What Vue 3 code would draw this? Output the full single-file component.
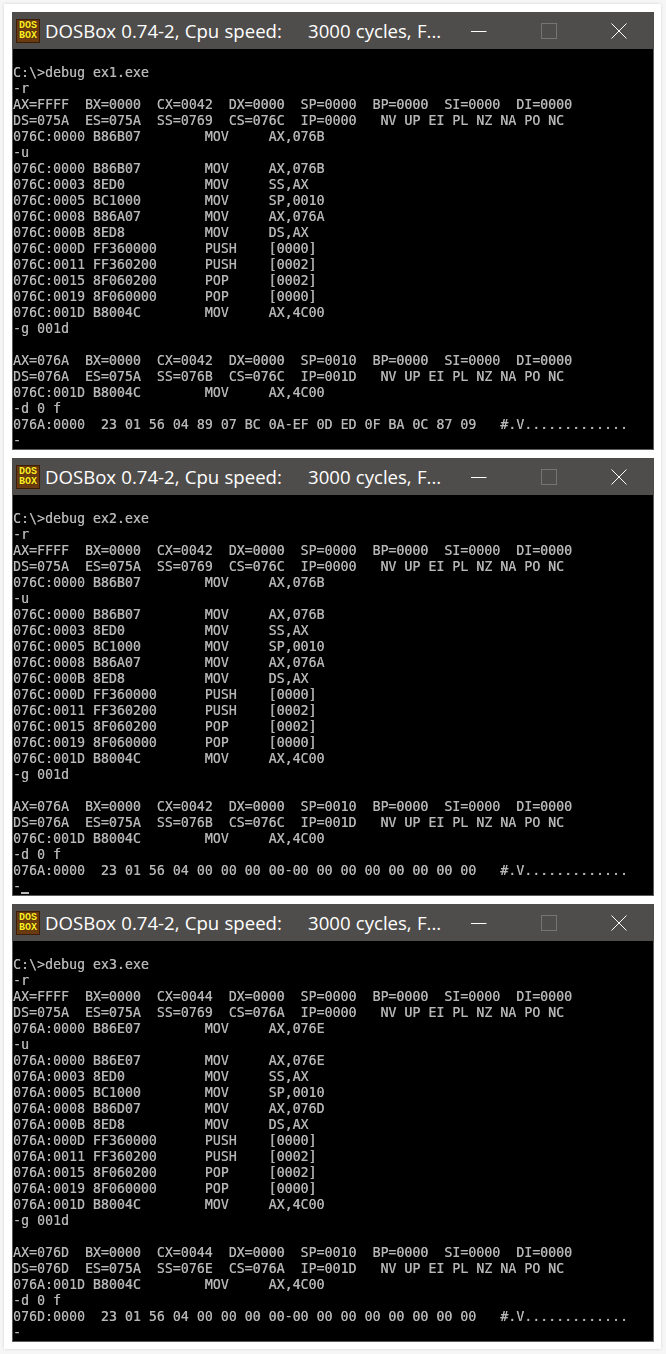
<script setup>
const build = (n, cx, cs, ae, ad, ss, dump, cursor) => ({
  id: n,
  cursor,
  lines: [
    '',
    `C:\\>debug ex${n}.exe`,
    '-r',
    `AX=FFFF  BX=0000  CX=${cx}  DX=0000  SP=0000  BP=0000  SI=0000  DI=0000`,
    `DS=075A  ES=075A  SS=0769  CS=${cs}  IP=0000   NV UP EI PL NZ NA PO NC`,
    `${cs}:0000 B8${ae.slice(2)}${ae.slice(0, 2)}        MOV     AX,${ae}`,
    '-u',
    `${cs}:0000 B8${ae.slice(2)}${ae.slice(0, 2)}        MOV     AX,${ae}`,
    `${cs}:0003 8ED0          MOV     SS,AX`,
    `${cs}:0005 BC1000        MOV     SP,0010`,
    `${cs}:0008 B8${ad.slice(2)}${ad.slice(0, 2)}        MOV     AX,${ad}`,
    `${cs}:000B 8ED8          MOV     DS,AX`,
    `${cs}:000D FF360000      PUSH    [0000]`,
    `${cs}:0011 FF360200      PUSH    [0002]`,
    `${cs}:0015 8F060200      POP     [0002]`,
    `${cs}:0019 8F060000      POP     [0000]`,
    `${cs}:001D B8004C        MOV     AX,4C00`,
    '-g 001d',
    '',
    `AX=${ad}  BX=0000  CX=${cx}  DX=0000  SP=0010  BP=0000  SI=0000  DI=0000`,
    `DS=${ad}  ES=075A  SS=${ss}  CS=${cs}  IP=001D   NV UP EI PL NZ NA PO NC`,
    `${cs}:001D B8004C        MOV     AX,4C00`,
    '-d 0 f',
    `${ad}:0000  ${dump}   #.V.............`,
    '-',
  ],
})
const zero = '23 01 56 04 00 00 00 00-00 00 00 00 00 00 00 00'
const title = 'DOSBox 0.74-2, Cpu speed:     3000 cycles, F...'
const windows = [
  build(1, '0042', '076C', '076B', '076A', '076B', '23 01 56 04 89 07 BC 0A-EF 0D ED 0F BA 0C 87 09', false),
  build(2, '0042', '076C', '076B', '076A', '076B', zero, true),
  build(3, '0044', '076A', '076E', '076D', '076E', zero, false),
]
</script>

<template>
  <div class="page">
    <div class="frame">
      <section v-for="w in windows" :key="w.id" class="win">
        <header class="bar">
          <div class="logo"><span>DOS</span><span>BOX</span></div>
          <div class="title">{{ title }}</div>
          <div class="controls">
            <div class="ctl">
              <svg width="16" height="16" viewBox="0 0 16 16"><path d="M0 8.5H15.5" stroke="#fff" stroke-width="1" /></svg>
            </div>
            <div class="ctl">
              <svg width="16" height="16" viewBox="0 0 16 16"><rect x="0.5" y="0.5" width="15" height="15" fill="none" stroke="#757575" stroke-width="1" /></svg>
            </div>
            <div class="ctl">
              <svg width="16" height="16" viewBox="0 0 16 16"><path d="M0.5 0.5L15.5 15.5M15.5 0.5L0.5 15.5" stroke="#fff" stroke-width="1" /></svg>
            </div>
          </div>
        </header>
        <div class="term">
          <div class="screen">
            <div v-for="(l, i) in w.lines" :key="i" class="row">{{ l }}<span v-if="w.cursor && i === w.lines.length - 1" class="cursor"></span></div>
          </div>
        </div>
      </section>
    </div>
  </div>
</template>

<style scoped>
.page {
  width: 666px;
  height: 1354px;
  box-sizing: border-box;
  padding: 4px 5px 5px 4px;
  background: #f6f6f6;
}
.frame {
  height: 100%;
  box-sizing: border-box;
  padding: 8px 7px 0 8px;
  background: #fff;
  box-shadow: 0 0 3px rgba(0, 0, 0, 0.14);
  display: flex;
  flex-direction: column;
  gap: 8px;
}
.win {
  width: 642px;
  height: 438px;
  flex: none;
  box-sizing: border-box;
  display: flex;
  flex-direction: column;
  border: 1px solid #5c5a58;
  border-top: 0;
}
.bar {
  height: 37px;
  flex: none;
  margin: 0 -1px;
  background: #4f4d4b;
  display: flex;
  align-items: center;
  padding-left: 4px;
}
.logo {
  width: 24px;
  height: 24px;
  flex: none;
  margin-top: 1px;
  background: #6a3a10;
  border: 1px solid #3d1e05;
  box-sizing: border-box;
  display: flex;
  flex-direction: column;
  align-items: center;
  justify-content: center;
  color: #ffee22;
  font: bold 10px/10px "Liberation Mono", monospace;
  text-shadow: 0 0 1px #2a1403;
}
.title {
  flex: 1;
  margin-left: 5px;
  color: #fff;
  white-space: pre;
  font: 18.6px/37px "Open Sans", sans-serif;
  word-spacing: 0.4px;
}
.controls {
  display: flex;
  flex: none;
}
.ctl {
  width: 70px;
  height: 37px;
  display: flex;
  align-items: center;
  justify-content: center;
}
.term {
  width: 640px;
  height: 400px;
  background: #000;
  overflow: hidden;
}
.screen {
  will-change: transform;
}
.row {
  height: 16px;
  white-space: pre;
  color: #b8b8b8;
  font: 13.28px/16px "DejaVu Sans Mono", monospace;
  text-shadow: 0.35px 0 0 #8a8a8a;
}
.cursor {
  display: inline-block;
  width: 8px;
  height: 2px;
  background: #b8b8b8;
  vertical-align: -3px;
}
</style>

<style>
html, body { margin: 0; background: #f6f6f6; }
</style>
